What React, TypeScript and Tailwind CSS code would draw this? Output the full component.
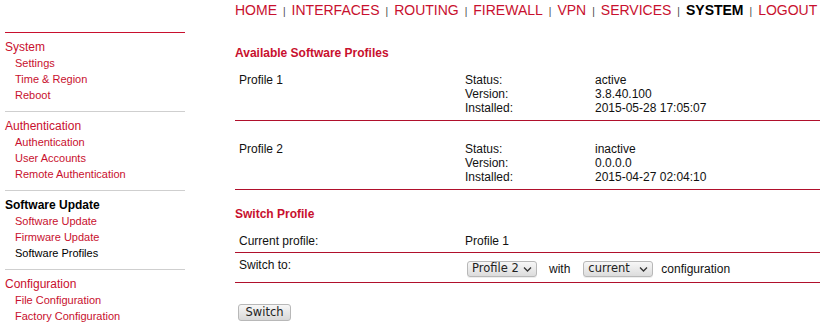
import React from "react";

const red = "text-[#c8102e]";

function SideGroup({
  title,
  items,
  active,
  current,
  first,
}: {
  title: string;
  items: string[];
  active?: boolean;
  current?: string;
  first?: boolean;
}) {
  return (
    <div className={`border-t ${first ? "border-[#c8102e]" : "border-[#cfcfcf]"} pt-[6px] pb-[8px]`}>
      <div className={`text-[12px] leading-[16px] ${active ? "font-bold text-black" : red}`}>{title}</div>
      {items.map((it) => (
        <div
          key={it}
          className={`pl-[10px] text-[11px] leading-[16px] ${it === current ? "text-black" : red}`}
        >
          {it}
        </div>
      ))}
    </div>
  );
}

function FakeSelect({ label, width }: { label: string; width: string }) {
  return (
    <div
      className={`relative flex h-[16px] ${width} items-center rounded-[3px] border border-[#b8b8b8] bg-gradient-to-b from-[#f7f7f7] to-[#dcdcdc] pl-[4px] text-[11.5px] leading-none text-[#222] shadow-[0_1px_0_#eee]`}
      style={{ fontFamily: '"DejaVu Sans", sans-serif' }}
    >
      {label}
      <svg className="absolute right-[4px] top-[4px]" width="9" height="7" viewBox="0 0 9 7">
        <path d="M1 1.5 L4.5 5 L8 1.5" fill="none" stroke="#333" strokeWidth="1.3" />
      </svg>
    </div>
  );
}

function ProfileRow({
  name,
  status,
  version,
  installed,
  top,
}: {
  name: string;
  status: string;
  version: string;
  installed: string;
  top: string;
}) {
  return (
    <div className={`flex border-b border-[#b0102c] ${top} pb-[5px] text-[12px] leading-[14px] text-[#111]`}>
      <div className="w-[230px] pl-[4px]">{name}</div>
      <div className="w-[130px]">
        <div>Status:</div>
        <div>Version:</div>
        <div>Installed:</div>
      </div>
      <div>
        <div>{status}</div>
        <div>{version}</div>
        <div>{installed}</div>
      </div>
    </div>
  );
}

export default function App() {
  const nav = ["HOME", "INTERFACES", "ROUTING", "FIREWALL", "VPN", "SERVICES", "SYSTEM", "LOGOUT"];
  return (
    <div
      className="flex h-[324px] w-[820px] overflow-hidden bg-white"
      style={{ fontFamily: '"Liberation Sans", Arial, sans-serif' }}
    >
      {/* sidebar */}
      <div className="ml-[5px] mt-[32px] w-[180px] shrink-0">
        <SideGroup first title="System" items={["Settings", "Time & Region", "Reboot"]} />
        <SideGroup title="Authentication" items={["Authentication", "User Accounts", "Remote Authentication"]} />
        <SideGroup
          active
          title="Software Update"
          items={["Software Update", "Firmware Update", "Software Profiles"]}
          current="Software Profiles"
        />
        <SideGroup title="Configuration" items={["File Configuration", "Factory Configuration"]} />
      </div>

      {/* main */}
      <div className="ml-[50px] flex-1">
        <div className="mt-[2px] flex items-baseline text-[14px] leading-[16px]">
          {nav.map((n, i) => (
            <React.Fragment key={n}>
              {i > 0 && <span className="mx-[6px] text-[10px] text-[#444]">|</span>}
              <span className={n === "SYSTEM" ? "font-bold text-black" : red}>{n}</span>
            </React.Fragment>
          ))}
        </div>

        <div className={`mt-[26px] text-[12px] font-bold leading-[14px] ${red}`}>Available Software Profiles</div>
        <ProfileRow
          top="pt-[13px]"
          name="Profile 1"
          status="active"
          version="3.8.40.100"
          installed="2015-05-28 17:05:07"
        />
        <ProfileRow
          top="pt-[21px]"
          name="Profile 2"
          status="inactive"
          version="0.0.0.0"
          installed="2015-04-27 02:04:10"
        />

        <div className={`mt-[17px] text-[12px] font-bold leading-[14px] ${red}`}>Switch Profile</div>
        <div className="mt-[13px] flex border-b border-[#b0102c] pb-[4px] text-[12px] leading-[14px] text-[#111]">
          <div className="w-[230px] pl-[4px]">Current profile:</div>
          <div>Profile 1</div>
        </div>
        <div className="flex border-b border-[#b0102c] pb-[5px] pt-[5px] text-[12px] leading-[14px] text-[#111]">
          <div className="w-[230px] pl-[4px]">Switch to:</div>
          <div className="flex items-center pt-[3px]">
            <div className="ml-[2px]">
              <FakeSelect label="Profile 2" width="w-[70px]" />
            </div>
            <span className="ml-[12px]">with</span>
            <div className="ml-[13px]">
              <FakeSelect label="current" width="w-[70px]" />
            </div>
            <span className="ml-[8px]">configuration</span>
          </div>
        </div>

        <button
          className="ml-[3px] mt-[21px] flex h-[17px] w-[53px] items-center justify-center rounded-[3px] border border-[#b8b8b8] bg-gradient-to-b from-[#f7f7f7] to-[#d8d8d8] text-[11.5px] leading-none text-[#222]"
          style={{ fontFamily: '"DejaVu Sans", sans-serif' }}
        >
          Switch
        </button>
      </div>
    </div>
  );
}
